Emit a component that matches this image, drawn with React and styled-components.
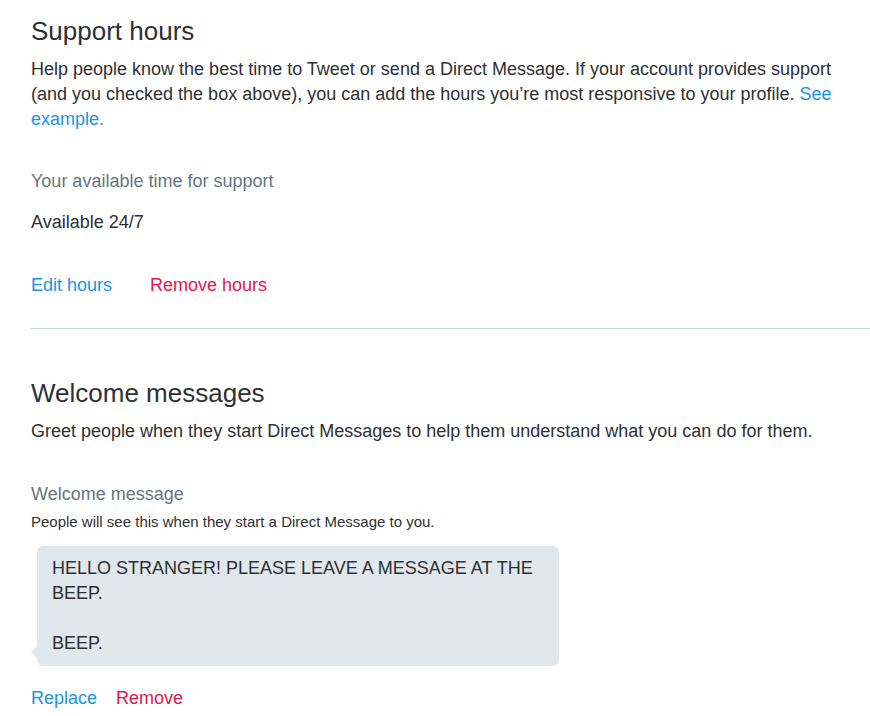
import React from "react";
import styled, { createGlobalStyle } from "styled-components";

const GlobalStyle = createGlobalStyle`
  * { box-sizing: border-box; }
  body {
    margin: 0;
    background: #fff;
    color: #2e3033;
    font-family: "Liberation Sans", Arial, sans-serif;
    font-size: 18px;
    line-height: 25px;
  }
`;

const Page = styled.main`
  padding: 16px 0 0 31px;
`;

const Section = styled.section`
  & + & {
    margin-top: 30px;
    padding-top: 49px;
    border-top: 1px solid #c0d2da;
  }
`;

const Title = styled.h2`
  margin: 0;
  font-size: 26px;
  font-weight: 400;
  line-height: 30px;
`;

const Description = styled.p`
  margin: 11px 0 0;
  padding-right: 31px;
`;

const Label = styled.h3`
  margin: ${(p) => p.$gap}px 0 0;
  color: #66757f;
  font-size: 18px;
  font-weight: 400;
`;

const Value = styled.p`
  margin: 16px 0 0;
`;

const Hint = styled.p`
  margin: 5px 0 0;
  font-size: 15px;
  line-height: 20px;
`;

const Link = styled.a`
  color: #1b95e0;
  text-decoration: none;
`;

const Actions = styled.div`
  display: flex;
  gap: ${(p) => p.$gap}px;
  margin-top: ${(p) => p.$top}px;
`;

const Action = styled.button`
  padding: 0;
  border: 0;
  background: none;
  color: ${(p) => (p.$danger ? "#e0184f" : "#1b95e0")};
  font: inherit;
  cursor: pointer;
`;

const Bubble = styled.div`
  position: relative;
  max-width: 522px;
  margin: 14px 0 0 6px;
  padding: 10px 15px;
  border-radius: 6px;
  background: #e0e7ed;
  white-space: pre-line;

  &::before {
    content: "";
    position: absolute;
    right: 100%;
    bottom: 8px;
    border: 6px solid transparent;
    border-left-width: 0;
    border-right-color: #e0e7ed;
  }
`;

const welcomeText = "HELLO STRANGER! PLEASE LEAVE A MESSAGE AT THE BEEP.\n\nBEEP.";

export default function App() {
  return (
    <>
      <GlobalStyle />
      <Page>
        <Section>
          <Title>Support hours</Title>
          <Description>
            Help people know the best time to Tweet or send a Direct Message. If your account
            provides support (and you checked the box above), you can add the hours you’re most
            responsive to your profile. <Link href="#example">See example.</Link>
          </Description>
          <Label $gap={37}>Your available time for support</Label>
          <Value>Available 24/7</Value>
          <Actions $gap={38} $top={38}>
            <Action type="button">Edit hours</Action>
            <Action type="button" $danger>Remove hours</Action>
          </Actions>
        </Section>
        <Section>
          <Title>Welcome messages</Title>
          <Description>
            Greet people when they start Direct Messages to help them understand what you can do
            for them.
          </Description>
          <Label $gap={38}>Welcome message</Label>
          <Hint>People will see this when they start a Direct Message to you.</Hint>
          <Bubble>{welcomeText}</Bubble>
          <Actions $gap={19} $top={20}>
            <Action type="button">Replace</Action>
            <Action type="button" $danger>Remove</Action>
          </Actions>
        </Section>
      </Page>
    </>
  );
}
